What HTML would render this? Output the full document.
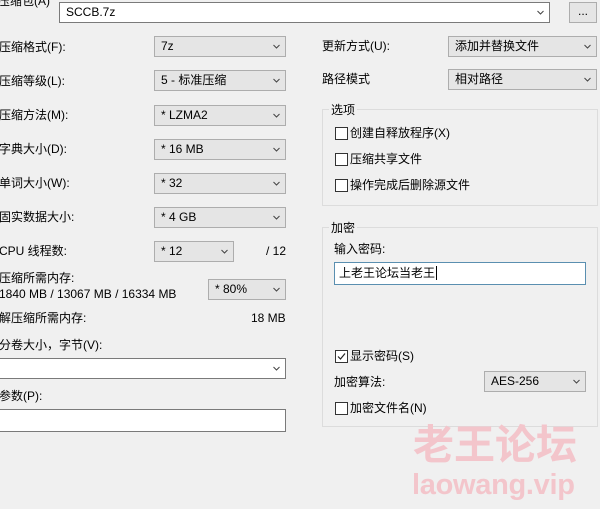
<!DOCTYPE html>
<html><head><meta charset="utf-8"><style>
*{box-sizing:border-box;margin:0;padding:0}
body{width:600px;height:509px;background:#f0f0f0;position:relative;overflow:hidden;font-family:"Liberation Sans","Noto Sans CJK SC",sans-serif;font-size:12px;color:#000}
.a{position:absolute;white-space:nowrap;line-height:14px}
.cb{position:absolute;background:#e5e5e5;border:1px solid #adadad;height:21px;line-height:19px;padding-left:6px}
.w{background:#fff;border:1px solid #7a7a7a}
.cb .ar{position:absolute;right:5px;top:6px;width:7px;height:7px}
.g{position:absolute;border:1px solid #dcdcdc}
.gl{position:absolute;background:#f0f0f0;padding:0 2px;line-height:14px}
.ck{position:absolute;width:13px;height:13px;border:1px solid #333;background:#fff}
</style></head><body>
<svg width="0" height="0" style="position:absolute"><defs><symbol id="v" viewBox="0 0 7 7"><path d="M0.5 2 L3.5 5 L6.5 2" fill="none" stroke="#444" stroke-width="1"/></symbol></defs></svg>
<div class="a" style="left:-2px;top:-6px">压缩包(A)</div>
<div class="cb w" style="left:59px;top:2px;width:491px;height:21px">SCCB.7z<svg class="ar" style="top:6px"><use href="#v"/></svg></div>
<div class="cb" style="left:569px;top:2px;width:28px;padding:0;text-align:center;line-height:17px">...</div>

<div class="a" style="left:-1px;top:40px">压缩格式(F):</div>
<div class="cb" style="left:154px;top:36px;width:132px">7z<svg class="ar"><use href="#v"/></svg></div>
<div class="a" style="left:-1px;top:74px">压缩等级(L):</div>
<div class="cb" style="left:154px;top:70px;width:132px">5 - 标准压缩<svg class="ar"><use href="#v"/></svg></div>
<div class="a" style="left:-1px;top:108px">压缩方法(M):</div>
<div class="cb" style="left:154px;top:105px;width:132px">* LZMA2<svg class="ar"><use href="#v"/></svg></div>
<div class="a" style="left:-1px;top:142px">字典大小(D):</div>
<div class="cb" style="left:154px;top:139px;width:132px">* 16 MB<svg class="ar"><use href="#v"/></svg></div>
<div class="a" style="left:-1px;top:176px">单词大小(W):</div>
<div class="cb" style="left:154px;top:173px;width:132px">* 32<svg class="ar"><use href="#v"/></svg></div>
<div class="a" style="left:-1px;top:210px">固实数据大小:</div>
<div class="cb" style="left:154px;top:207px;width:132px">* 4 GB<svg class="ar"><use href="#v"/></svg></div>
<div class="a" style="left:-1px;top:244px">CPU 线程数:</div>
<div class="cb" style="left:154px;top:241px;width:80px">* 12<svg class="ar"><use href="#v"/></svg></div>
<div class="a" style="left:266px;top:244px">/ 12</div>
<div class="a" style="left:-1px;top:271px">压缩所需内存:</div>
<div class="a" style="left:-1px;top:287px">1840 MB / 13067 MB / 16334 MB</div>
<div class="cb" style="left:208px;top:279px;width:78px">* 80%<svg class="ar"><use href="#v"/></svg></div>
<div class="a" style="left:-1px;top:311px">解压缩所需内存:</div>
<div class="a" style="left:251px;top:311px">18 MB</div>
<div class="a" style="left:-1px;top:338px">分卷大小，字节(V):</div>
<div class="cb w" style="left:-2px;top:358px;width:288px;height:21px"><svg class="ar"><use href="#v"/></svg></div>
<div class="a" style="left:-1px;top:389px">参数(P):</div>
<div class="cb w" style="left:-2px;top:409px;width:288px;height:23px"></div>

<div class="a" style="left:322px;top:39px">更新方式(U):</div>
<div class="cb" style="left:448px;top:36px;width:149px">添加并替换文件<svg class="ar"><use href="#v"/></svg></div>
<div class="a" style="left:322px;top:72px">路径模式</div>
<div class="cb" style="left:448px;top:69px;width:149px">相对路径<svg class="ar"><use href="#v"/></svg></div>

<div class="g" style="left:322px;top:109px;width:276px;height:97px"></div>
<div class="gl" style="left:329px;top:103px">选项</div>
<div class="ck" style="left:335px;top:127px"></div><div class="a" style="left:350px;top:126px">创建自释放程序(X)</div>
<div class="ck" style="left:335px;top:153px"></div><div class="a" style="left:350px;top:152px">压缩共享文件</div>
<div class="ck" style="left:335px;top:179px"></div><div class="a" style="left:350px;top:178px">操作完成后删除源文件</div>

<div class="g" style="left:322px;top:227px;width:276px;height:200px"></div>
<div class="gl" style="left:329px;top:221px">加密</div>
<div class="a" style="left:334px;top:242px">输入密码:</div>
<div class="cb" style="left:334px;top:262px;width:252px;height:23px;background:#fff;border-color:#5a8fb0;line-height:20px;padding-left:4px">上老王论坛当老王<span style="border-left:1px solid #000;margin-left:1px"></span></div>
<div class="ck" style="left:335px;top:350px"><svg width="11" height="11" style="position:absolute;left:0;top:0"><path d="M2 5.5 L4.5 8 L9 2.5" fill="none" stroke="#222" stroke-width="1.2"/></svg></div>
<div class="a" style="left:350px;top:349px">显示密码(S)</div>
<div class="a" style="left:334px;top:375px">加密算法:</div>
<div class="cb" style="left:484px;top:371px;width:102px">AES-256<svg class="ar"><use href="#v"/></svg></div>
<div class="ck" style="left:335px;top:402px"></div><div class="a" style="left:350px;top:401px">加密文件名(N)</div>

<div class="a" style="left:413px;top:422px;font-size:41px;line-height:46px;font-weight:bold;color:#f3c5cb">老王论坛</div>
<div class="a" style="left:412px;top:468px;font-size:29px;line-height:34px;font-weight:bold;color:#f3c5cb;letter-spacing:-0.3px">laowang.vip</div>
</body></html>
